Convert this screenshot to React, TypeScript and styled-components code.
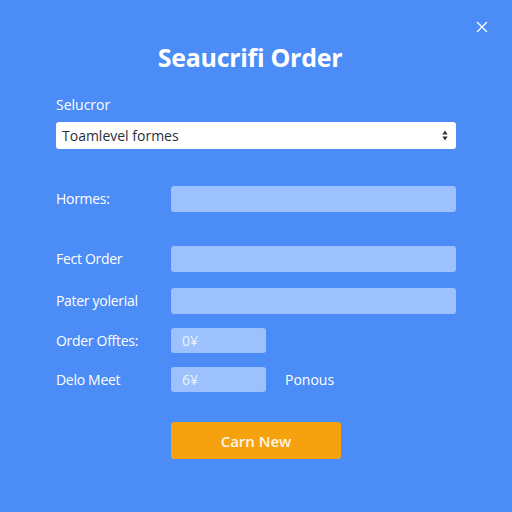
import React from "react";
import styled, { createGlobalStyle } from "styled-components";

const GlobalStyle = createGlobalStyle`
  html, body {
    margin: 0;
    padding: 0;
    background: #4b8cf7;
  }
  body {
    font-family: "Open Sans", "Liberation Sans", sans-serif;
  }
`;

const Dialog = styled.div`
  position: relative;
  width: 512px;
  height: 512px;
  box-sizing: border-box;
  padding: 41px 56px 0 56px;
  background: #4b8cf7;
  color: #ffffff;
  display: flex;
  flex-direction: column;
`;

const CloseButton = styled.button`
  position: absolute;
  top: 20px;
  right: 23px;
  width: 14px;
  height: 14px;
  padding: 0;
  border: none;
  background: transparent;
  display: flex;
  align-items: center;
  justify-content: center;
`;

const Title = styled.h1`
  margin: 0;
  padding-right: 12px;
  font-size: 25px;
  line-height: 32px;
  font-weight: 700;
  text-align: center;
  letter-spacing: -0.3px;
`;

const FieldLabel = styled.div`
  margin-top: 23px;
  font-size: 14px;
  line-height: 18px;
`;

const SelectBox = styled.div`
  margin-top: 8px;
  height: 27px;
  box-sizing: border-box;
  background: #ffffff;
  border-radius: 3px;
  padding: 0 8px 0 6px;
  display: flex;
  align-items: center;
  justify-content: space-between;
  color: #2a2f3a;
  font-size: 14px;
`;

const Row = styled.div<{ $top: number }>`
  margin-top: ${(p) => p.$top}px;
  display: grid;
  grid-template-columns: 115px 1fr;
  align-items: center;
`;

const RowLabel = styled.span`
  font-size: 14px;
  line-height: 18px;
  letter-spacing: -0.3px;
`;

const Inline = styled.div`
  display: flex;
  align-items: center;
  gap: 19px;
`;

const Input = styled.div<{ $h: number; $short?: boolean }>`
  height: ${(p) => p.$h}px;
  width: ${(p) => (p.$short ? "95px" : "auto")};
  box-sizing: border-box;
  background: #9dc1fc;
  border-radius: 3px;
  padding-left: 11px;
  display: flex;
  align-items: center;
  font-size: 14px;
  color: #eef4ff;
`;

const Note = styled.span`
  font-size: 14px;
`;

const Actions = styled.div`
  margin-top: 30px;
  padding-left: 115px;
`;

const PrimaryButton = styled.button`
  width: 170px;
  height: 37px;
  border: none;
  border-radius: 3px;
  background: #f6a10e;
  color: #fff6e8;
  font-family: "Open Sans", "Liberation Sans", sans-serif;
  font-size: 15px;
  font-weight: 600;
  padding: 0;
`;

const Stepper = () => (
  <svg width="6" height="11" viewBox="0 0 6 11">
    <path d="M3 0.5 L5.6 4.5 H0.4 Z" fill="#2a2f3a" />
    <path d="M3 10.5 L5.6 6.5 H0.4 Z" fill="#2a2f3a" />
  </svg>
);

export default function App() {
  return (
    <>
      <GlobalStyle />
      <Dialog>
        <CloseButton aria-label="close">
          <svg width="12" height="12" viewBox="0 0 12 12">
            <path d="M1 1 L11 11 M11 1 L1 11" stroke="#ffffff" strokeWidth="1.3" />
          </svg>
        </CloseButton>
        <Title>Seaucrifi Order</Title>
        <FieldLabel>Selucror</FieldLabel>
        <SelectBox>
          <span>Toamlevel formes</span>
          <Stepper />
        </SelectBox>
        <Row $top={37}>
          <RowLabel>Hormes:</RowLabel>
          <Input $h={26} />
        </Row>
        <Row $top={34}>
          <RowLabel>Fect Order</RowLabel>
          <Input $h={26} />
        </Row>
        <Row $top={16}>
          <RowLabel>Pater yolerial</RowLabel>
          <Input $h={26} />
        </Row>
        <Row $top={14}>
          <RowLabel>Order Offtes:</RowLabel>
          <Input $h={25} $short>0¥</Input>
        </Row>
        <Row $top={14}>
          <RowLabel>Delo Meet</RowLabel>
          <Inline>
            <Input $h={25} $short>6¥</Input>
            <Note>Ponous</Note>
          </Inline>
        </Row>
        <Actions>
          <PrimaryButton>Carn New</PrimaryButton>
        </Actions>
      </Dialog>
    </>
  );
}
